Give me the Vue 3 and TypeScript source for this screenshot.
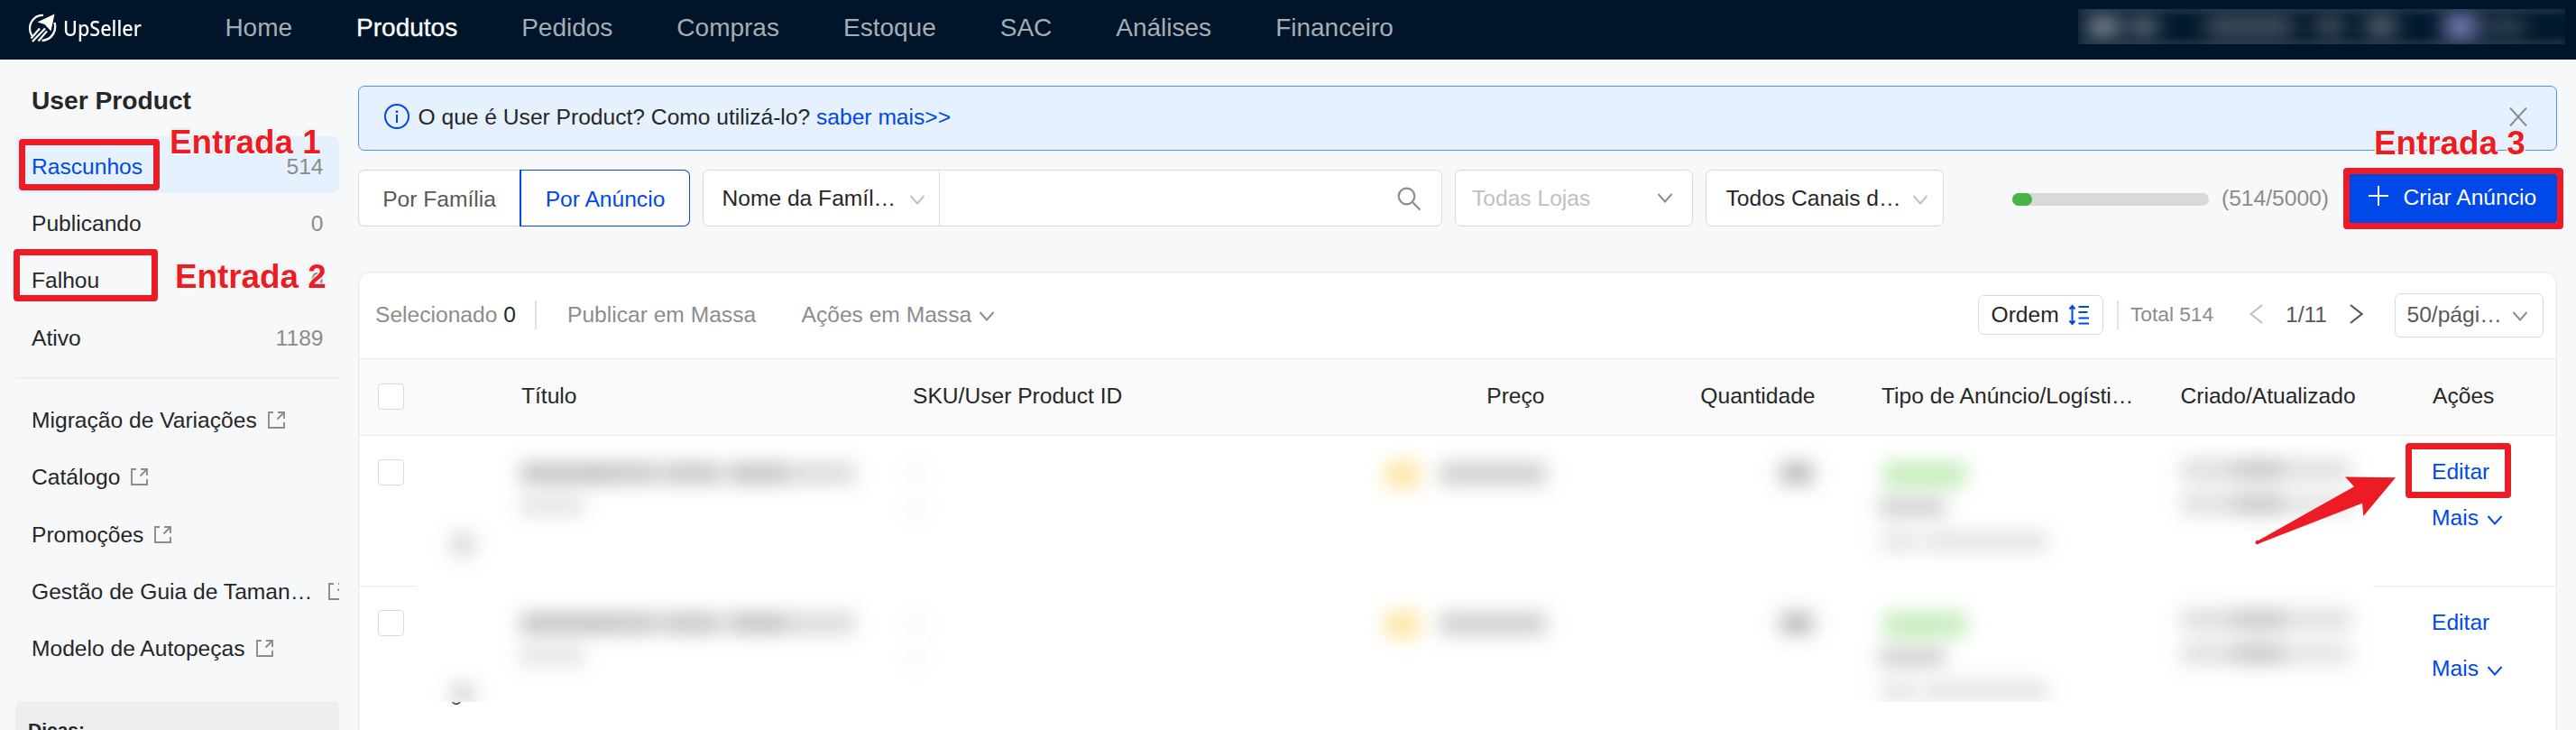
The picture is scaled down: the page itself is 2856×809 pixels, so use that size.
<script setup lang="ts">
interface MenuItem {
  label: string
  count: number
  active?: boolean
}

interface Blob {
  x: number
  y: number
  w: number
  h: number
  fill: string
  o: number
}

const nav: string[] = ['Home', 'Produtos', 'Pedidos', 'Compras', 'Estoque', 'SAC', 'Análises', 'Financeiro']

const menu: MenuItem[] = [
  { label: 'Rascunhos', count: 514, active: true },
  { label: 'Publicando', count: 0 },
  { label: 'Falhou', count: 0 },
  { label: 'Ativo', count: 1189 },
]

const links: string[] = [
  'Migração de Variações',
  'Catálogo',
  'Promoções',
  'Gestão de Guia de Taman…',
  'Modelo de Autopeças',
]

// Offsets are relative to the left edge and top border of a table row.
const cellBlobs: Blob[] = [
  { x: 115, y: 29, w: 92, h: 25, fill: '#777', o: 0.42 },
  { x: 205, y: 29, w: 62, h: 25, fill: '#777', o: 0.39 },
  { x: 272, y: 29, w: 66, h: 25, fill: '#777', o: 0.39 },
  { x: 346, y: 29, w: 62, h: 25, fill: '#777', o: 0.42 },
  { x: 408, y: 29, w: 78, h: 25, fill: '#777', o: 0.26 },
  { x: 114, y: 67, w: 72, h: 22, fill: '#888', o: 0.22 },
  { x: 38, y: 107, w: 26, h: 26, fill: '#777', o: 0.28 },
  { x: 545, y: 31, w: 16, h: 22, fill: '#888', o: 0.07 },
  { x: 545, y: 69, w: 16, h: 22, fill: '#888', o: 0.07 },
  { x: 1074, y: 27, w: 38, h: 32, fill: '#ffd057', o: 0.5 },
  { x: 1134, y: 29, w: 118, h: 26, fill: '#777', o: 0.34 },
  { x: 1512, y: 28, w: 36, h: 27, fill: '#666', o: 0.42 },
  { x: 1626, y: 28, w: 92, h: 30, fill: '#7bd368', o: 0.42 },
  { x: 1621, y: 68, w: 74, h: 22, fill: '#777', o: 0.34 },
  { x: 1623, y: 105, w: 42, h: 24, fill: '#888', o: 0.2 },
  { x: 1672, y: 105, w: 136, h: 24, fill: '#888', o: 0.22 },
  { x: 1956, y: 25, w: 59, h: 25, fill: '#777', o: 0.24 },
  { x: 2015, y: 25, w: 54, h: 25, fill: '#777', o: 0.38 },
  { x: 2069, y: 25, w: 76, h: 25, fill: '#777', o: 0.22 },
  { x: 1956, y: 63, w: 59, h: 25, fill: '#777', o: 0.22 },
  { x: 2015, y: 63, w: 54, h: 25, fill: '#777', o: 0.38 },
  { x: 2069, y: 63, w: 76, h: 25, fill: '#777', o: 0.2 },
]

const rows = [
  { id: 1, top: 0, clip: 11, height: 156 },
  { id: 2, top: -1, clip: 0, height: 128 },
]
</script>

<template>
  <div class="page">
    <header class="topbar">
      <div class="logo">
        <svg width="32" height="32" viewBox="0 0 32 32" fill="none" stroke="#fff">
          <path d="M17 2C9 1.5 2 8 2 16.500C2 20 3 22.500 4.500 25" stroke-width="2.2" />
          <path d="M29.500 10C32 19 27 29 15.500 30" stroke-width="2.4" />
          <path d="M3.500 27.500L13 16.500M5 31L19 16.500M11.500 30.500L21 19.500" stroke-width="2.2" />
          <path d="M29.500 0.500L10.500 9.500L18.500 12L25.500 19.500Z" fill="#fff" stroke="none" />
        </svg>
        <span class="brand">UpSeller</span>
      </div>
      <nav class="nav">
        <a v-for="item in nav" :key="item" :class="{ on: item === 'Produtos' }">{{ item }}</a>
      </nav>
      <svg class="account" width="540" height="39" viewBox="0 0 540 39">
        <defs>
          <filter id="soft" x="-100%" y="-100%" width="300%" height="300%"><feGaussianBlur stdDeviation="11 8" /></filter>
          <filter id="edge" filterUnits="userSpaceOnUse" x="-20" y="-20" width="580" height="80"><feGaussianBlur stdDeviation="4" /></filter>
        </defs>
        <rect width="540" height="39" fill="#021a2e" />
        <g filter="url(#soft)">
          <rect x="10" y="4" width="36" height="31" fill="#66717d" />
          <rect x="58" y="5" width="30" height="29" fill="#4c5c68" />
          <rect x="142" y="4" width="96" height="31" fill="#384554" />
          <rect x="264" y="5" width="30" height="29" fill="#3a4653" />
          <rect x="320" y="5" width="32" height="29" fill="#4a5662" />
          <rect x="406" y="2" width="36" height="35" fill="#6970a2" />
          <rect x="454" y="7" width="40" height="26" fill="#2a3c4b" />
        </g>
        <path d="M0 0H540M0 39H540" stroke="#425363" stroke-width="6" opacity=".7" filter="url(#edge)" />
      </svg>
    </header>

    <div class="body">
      <aside class="side">
        <h1>User Product</h1>
        <ul class="menu">
          <li v-for="m in menu" :key="m.label" :class="{ active: m.active }">
            <span>{{ m.label }}</span><em>{{ m.count }}</em>
          </li>
        </ul>
        <div class="rule"></div>
        <ul class="links">
          <li v-for="l in links" :key="l">
            <span>{{ l }}</span>
            <svg width="19" height="19" viewBox="0 0 19 19" fill="none" stroke="#8c8c8c" stroke-width="1.900">
              <path d="M6 1H1V18H18V12M11 1H18V8M17.500 1.500L10.500 8.500" />
            </svg>
          </li>
        </ul>
        <div class="tips">Dicas:</div>
      </aside>

      <main class="main">
        <div class="alert">
          <svg width="28" height="28" viewBox="0 0 28 28" fill="none" stroke="#0048e8">
            <circle cx="14" cy="14" r="13" stroke-width="2" />
            <path d="M14 12V21" stroke-width="2" /><path d="M14 7.500V10" stroke-width="2.500" />
          </svg>
          <p>O que é User Product? Como utilizá-lo? <a>saber mais&gt;&gt;</a></p>
          <svg class="close" width="20" height="21" viewBox="0 0 20 21" fill="none" stroke="#8c8c8c" stroke-width="2">
            <path d="M1 .5L19 20.500M19 .5L1 20.500" />
          </svg>
        </div>

        <div class="filters">
          <div class="tabs"><button>Por Família</button><button class="sel">Por Anúncio</button></div>
          <div class="search">
            <div class="select family">
              <span>Nome da Famíl…</span>
              <svg class="chev low" width="18" height="11" viewBox="0 0 18 11"><path d="M1.500 1L9 9.500L16.500 1" /></svg>
            </div>
            <div class="field">
              <svg width="27" height="27" viewBox="0 0 27 27" fill="none" stroke="#8c8c8c" stroke-width="2.200">
                <circle cx="10.500" cy="10.500" r="8.800" /><path d="M17 17L25.500 25.500" />
              </svg>
            </div>
          </div>
          <div class="select stores">
            <span>Todas Lojas</span>
            <svg class="chev mid" width="18" height="11" viewBox="0 0 18 11"><path d="M1.500 1L9 9.500L16.500 1" /></svg>
          </div>
          <div class="select channels">
            <span>Todos Canais d…</span>
            <svg class="chev low" width="18" height="11" viewBox="0 0 18 11"><path d="M1.500 1L9 9.500L16.500 1" /></svg>
          </div>
          <div class="quota">
            <div class="bar"><i></i></div>
            <span>(514/5000)</span>
          </div>
          <button class="create">
            <svg width="22" height="22" viewBox="0 0 22 22" stroke="#fff" stroke-width="2"><path d="M11 0V22M0 11H22" /></svg>
            <span>Criar Anúncio</span>
          </button>
        </div>

        <section class="card">
          <div class="toolbar">
            <span class="picked">Selecionado <b>0</b></span>
            <i class="sep"></i>
            <span class="bulk">Publicar em Massa</span>
            <span class="bulk-more">Ações em Massa</span>
            <svg class="chev gray" width="18" height="11" viewBox="0 0 18 11"><path d="M1.500 1L9 9.500L16.500 1" /></svg>
            <div class="order">
              <span>Ordem</span>
              <svg width="24" height="24" viewBox="0 0 24 24" fill="none" stroke="#0048e8" stroke-width="2">
                <path d="M4.500 2V22M1.500 5.500L4.500 2L7.500 5.500M1.500 18.500L4.500 22L7.500 18.500M11.500 3H23M11.500 9H21.500M11.500 15.500H23M11.500 21.500H23" />
              </svg>
            </div>
            <i class="sep second"></i>
            <span class="total">Total 514</span>
            <svg class="prev" width="15" height="22" viewBox="0 0 15 22" fill="none" stroke="#bfbfbf" stroke-width="2"><path d="M14 1L1.500 11L14 21" /></svg>
            <span class="pages">1/11</span>
            <svg class="next" width="15" height="22" viewBox="0 0 15 22" fill="none" stroke="#595959" stroke-width="2.200"><path d="M1 1L13.500 11L1 21" /></svg>
            <div class="select size">
              <span>50/pági…</span>
              <svg class="chev mid" width="18" height="11" viewBox="0 0 18 11"><path d="M1.500 1L9 9.500L16.500 1" /></svg>
            </div>
          </div>

          <div class="thead">
            <i class="box"></i>
            <span>Título</span>
            <span>SKU/User Product ID</span>
            <span class="right">Preço</span>
            <span class="right">Quantidade</span>
            <span class="kind">Tipo de Anúncio/Logísti…</span>
            <span>Criado/Atualizado</span>
            <span>Ações</span>
          </div>

          <div v-for="r in rows" :key="r.id" class="row">
            <div class="pick"><i class="box"></i></div>
            <svg class="mosaic" width="2169" :height="r.height" :viewBox="`0 0 2169 ${r.height}`">
              <defs>
                <filter :id="'cell' + r.id" filterUnits="userSpaceOnUse" x="-20" y="-20" width="2210" height="220">
                  <feGaussianBlur stdDeviation="10.500 10" />
                </filter>
                <clipPath :id="'area' + r.id"><rect x="0" :y="r.clip" width="2169" height="200" /></clipPath>
              </defs>
              <g :clip-path="`url(#area${r.id})`">
                <g :filter="`url(#cell${r.id})`">
                  <rect
                    v-for="(b, i) in cellBlobs"
                    :key="i"
                    :x="b.x" :y="b.y + r.top" :width="b.w" :height="b.h" :fill="b.fill" :opacity="b.o"
                  />
                </g>
              </g>
            </svg>
            <svg v-if="r.id === 2" class="tail" width="10" height="4" viewBox="0 0 10 4"><path d="M.5 0Q5 4.500 9 0" fill="none" stroke="#555" stroke-width="1.800" /></svg>
            <div class="actions">
              <a>Editar</a>
              <a>Mais <svg class="chev blue" width="18" height="11" viewBox="0 0 18 11"><path d="M1.500 1L9 9.500L16.500 1" /></svg></a>
            </div>
          </div>
        </section>
      </main>
    </div>

    <div class="mark m1"></div>
    <div class="mark m2"></div>
    <div class="mark m3"></div>
    <div class="mark m4"></div>
    <div class="note n1">Entrada 1</div>
    <div class="note n2">Entrada 2</div>
    <div class="note n3">Entrada 3</div>
    <svg class="arrow" width="160" height="80" viewBox="0 0 160 80">
      <path d="M3 75L111 14.300L101 3.500L157 4.300L121.300 47L120 32.700L5 77.500Z" fill="#ed1c24" />
      <circle cx="3.700" cy="76" r="2.200" fill="#ed1c24" />
    </svg>
  </div>
</template>

<style>
html, body { margin: 0; background: #f7f8fa; overflow: hidden; }
</style>

<style scoped>
* { box-sizing: border-box; }
.page { position: relative; width: 2856px; height: 809px; overflow: hidden; background: #f7f8fa; color: #262626; font: 24.600px/36px "Liberation Sans", Arial, sans-serif; white-space: nowrap; }
ul, p, h1 { margin: 0; padding: 0; list-style: none; }
svg { display: block; flex: none; }
button { font: inherit; color: inherit; margin: 0; padding: 0; border: 0; background: none; }
a { color: #0048e8; }

.topbar { display: flex; height: 66px; background: #001529; padding-left: 31px; }
.logo { display: flex; width: 218.400px; padding-top: 15px; }
.brand { margin-left: 7px; color: #fff; font: 500 24px/32px "Noto Sans", sans-serif; transform: scaleX(.9); transform-origin: 0 50%; }
.nav { display: flex; gap: 71px; font-size: 28px; line-height: 61px; }
.nav a { color: #a6adb4; }
.nav .on { color: #fff; -webkit-text-stroke: .3px #fff; }
.account { margin: 10px 12px 0 auto; }

.body { display: flex; gap: 21px; }
.side { width: 376px; padding-left: 17px; height: 743px; overflow: hidden; }
.side h1 { padding: 27px 0 0 18px; height: 85px; font: bold 28.200px/36px "Liberation Sans", Arial, sans-serif; }
.menu li { display: flex; justify-content: space-between; height: 63.200px; padding: 3px 17.500px 0 18px; line-height: 62px; border-radius: 7px; }
.menu em { font-style: normal; color: #8c8c8c; }
.menu .active { background: #e6f1ff; color: #0048e8; }
.rule { height: 2px; margin-top: 14px; background: #eceef0; }
.links { padding-top: 15px; }
.links li { display: flex; height: 63.400px; padding-left: 18px; line-height: 62px; }
.links svg { margin: 21px 0 0 12px; }
.links li:nth-child(4) svg { margin-left: 18px; }
.tips { margin-top: 25px; height: 80px; padding: 14px 0 0 14px; border-radius: 7px; background: #edeeef; font: bold 21px/36px "Liberation Sans", Arial, sans-serif; }

.main { width: 2438px; padding-top: 29px; }
.alert { display: flex; height: 72px; border: 1px solid #4a93f8; border-radius: 7px; background: #e6f1ff; padding: 19px 32px 0 28px; }
.alert p { margin: -4px 0 0 9.500px; line-height: 38px; }
.close { margin: 4px 0 0 auto; }

.filters { display: flex; height: 63px; margin-top: 21px; }
.tabs { display: flex; width: 368px; margin-right: 14px; line-height: 63px; }
.tabs button { width: 179px; border: 1px solid #d9d9d9; border-right: 0; border-radius: 7px 0 0 7px; background: #fff; color: #595959; line-height: 64px; }
.tabs .sel { width: 189px; border: 1px solid #0048e8; border-left: 2px solid #0048e8; border-radius: 0 7px 7px 0; color: #0048e8; }
.select { display: flex; justify-content: space-between; background: #fff; border: 1px solid #d9d9d9; border-radius: 7px; line-height: 61px; }
.chev { fill: none; stroke: #bfbfbf; stroke-width: 1.900; }
.search { display: flex; width: 820px; margin-right: 14px; background: #fff; border: 1px solid #d9d9d9; border-radius: 7px; }
.family { width: 262px; border: 0; border-right: 1px solid #d9d9d9; border-radius: 7px 0 0 7px; padding: 0 15px 0 20.500px; }
.low { margin-top: 27px; }
.mid { margin-top: 25px; stroke: #8c8c8c; }
.field { flex: 1; display: flex; justify-content: flex-end; padding: 18px 22px 0 0; }
.stores { width: 264px; margin-right: 14px; padding: 0 21px 0 18px; color: #bfbfbf; }
.channels { width: 264px; padding: 0 16px 0 21.500px; }
.quota { display: flex; width: 449px; padding-left: 76px; color: #8c8c8c; line-height: 64px; }
.bar { width: 218px; height: 14px; margin: 26px 14px 0 0; border-radius: 7px; background: #d9d9d9; }
.bar i { display: block; width: 22px; height: 14px; border-radius: 7px; background: #48b446; }
.create { display: flex; width: 231px; height: 63px; padding: 18px 0 0 22px; background: #0048e8; color: #fff; border-radius: 7px; }
.create span { margin-left: 16.500px; line-height: 26px; }

.card { height: 560px; margin-top: 50px; background: #fff; border: 1px solid #e5e7ea; border-radius: 14px 14px 0 0; overflow: hidden; }
.toolbar { display: flex; height: 95px; padding-left: 18px; line-height: 93px; color: #8c8c8c; }
.picked { width: 177px; }
.picked b { font-weight: 400; color: #262626; }
.sep { width: 2px; height: 32px; margin-top: 31px; background: #e3e3e3; }
.bulk { margin-left: 34px; width: 259.500px; }
.gray { margin: 43px 0 0 8px; stroke: #8c8c8c; }
.order { display: flex; width: 139.500px; height: 44px; margin: 25px 0 0 auto; border: 1px solid #d9d9d9; border-radius: 7px; color: #262626; line-height: 42px; padding-left: 14px; }
.order svg { margin: 9px 0 0 10px; }
.second { margin-left: 15px; }
.total { margin-left: 13px; width: 132px; font-size: 22.700px; }
.prev { margin-top: 35px; }
.pages { margin-left: 25px; width: 71px; color: #595959; }
.next { margin-top: 35px; }
.size { width: 165px; height: 49px; margin: 23px 14px 0 35px; padding: 0 16px 0 12.500px; line-height: 46px; color: #595959; }
.size .mid { margin-top: 19px; }

.thead { display: grid; grid-template-columns: 159.500px 434px 620.500px 80px 300px 405px 279.500px 1fr; height: 86px; padding-left: 20.500px; border-top: 1px solid #ebebeb; border-bottom: 1px solid #ebebeb; background: #fafafa; line-height: 81px; }
.thead .right { text-align: right; }
.thead .kind { padding-left: 73.500px; }
.box { display: block; width: 29px; height: 28.500px; border: 1px solid #d9d9d9; border-radius: 4px; background: #fff; }
.thead .box { margin-top: 27px; }
.row { display: flex; height: 167px; position: relative; }
.pick { width: 64px; padding: 26px 0 0 20.500px; border-bottom: 1px solid #ebebeb; }
.actions { flex: 1; padding: 21px 0 0 65px; border-bottom: 1px solid #ebebeb; }
.actions a { display: flex; height: 51px; line-height: 38px; }
.actions .chev { margin: 16px 0 0 9px; }
.actions .blue { stroke: #0048e8; }
.tail { position: absolute; left: 103px; top: 128px; }

.mark { position: absolute; border: 7px solid #ed1c24; border-radius: 4px; }
.m1 { left: 20.500px; top: 153.500px; width: 156.500px; height: 57px; }
.m2 { left: 15px; top: 276px; width: 160px; height: 57.500px; }
.m3 { left: 2597.500px; top: 186px; width: 244.500px; height: 68px; }
.m4 { left: 2667px; top: 491px; width: 117px; height: 61px; }
.note { position: absolute; color: #ed1c24; font: bold 36.800px/42px "Liberation Sans", Arial, sans-serif; text-shadow: 1.500px 0 #fff, -1.500px 0 #fff, 0 1.500px #fff, 0 -1.500px #fff, 0 0 3px #aaa; }
.n1 { left: 188px; top: 137px; }
.n2 { left: 194px; top: 286px; }
.n3 { left: 2632px; top: 138px; }
.arrow { position: absolute; left: 2499px; top: 525px; }
</style>
